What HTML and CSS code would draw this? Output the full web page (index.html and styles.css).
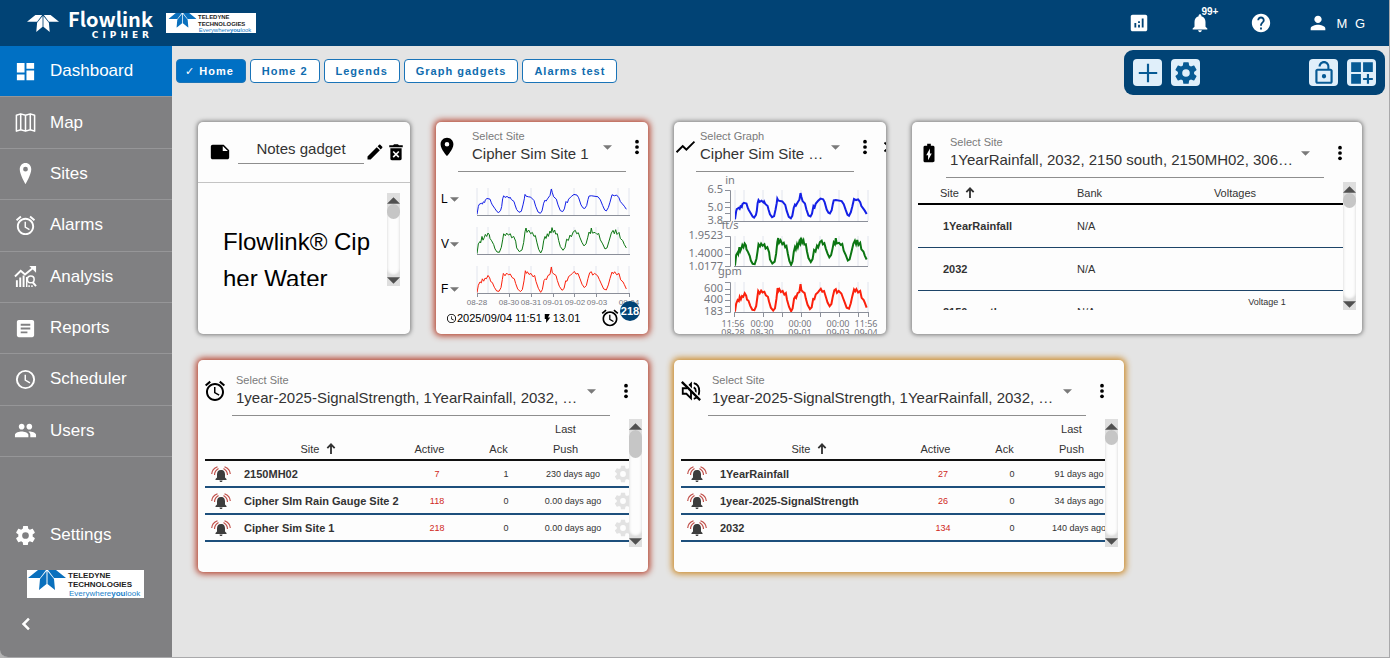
FILE: index.html
```html
<!DOCTYPE html>
<html lang="en">
<head>
	<meta charset="UTF-8">
	<meta name="viewport" content="width=device-width, initial-scale=1">
	<title>Flowlink Cipher</title>
	<link rel="stylesheet" href="styles.css">
</head>
<body>
	<!-- icon sprite -->
	<svg class="sprite" aria-hidden="true">
		<symbol id="i-dashboard" viewBox="0 0 24 24"><path d="M3 13h8V3H3v10zm0 8h8v-6H3v6zm10 0h8V11h-8v10zm0-18v6h8V3h-8z"/></symbol>
		<symbol id="i-map" viewBox="0 0 24 24"><path fill="none" stroke="currentColor" stroke-width="1.6" stroke-linejoin="round" d="M2.500 4.500L7 3l5 1.500L17 3l4.500 1.500V21L17 19.500 12 21l-5-1.500L2.500 21zM7 3v16.500M12 4.500V21M17 3v16.500"/></symbol>
		<symbol id="i-pin" viewBox="0 0 24 24"><path d="M12 1C8.500 1 6 3.700 6 7.500 6 13 12 23 12 23s6-10 6-15.500C18 3.700 15.500 1 12 1zm0 9a2.500 2.500 0 1 1 0-5 2.500 2.500 0 0 1 0 5z"/></symbol>
		<symbol id="i-place" viewBox="0 0 24 24"><path d="M12 2C8.130 2 5 5.130 5 9c0 5.250 7 13 7 13s7-7.750 7-13c0-3.870-3.130-7-7-7zm0 9.500a2.500 2.500 0 1 1 0-5 2.500 2.500 0 0 1 0 5z"/></symbol>
		<symbol id="i-alarm" viewBox="0 0 24 24"><path d="M22 5.720l-4.600-3.860-1.290 1.530 4.600 3.860L22 5.720zM7.880 3.390L6.600 1.860 2 5.710l1.290 1.530 4.590-3.850zM12.500 8H11v6l4.750 2.850.75-1.230-4-2.370V8zM12 4c-4.970 0-9 4.030-9 9s4.020 9 9 9c4.970 0 9-4.030 9-9s-4.030-9-9-9zm0 16c-3.870 0-7-3.130-7-7s3.130-7 7-7 7 3.130 7 7-3.130 7-7 7z"/></symbol>
		<symbol id="i-analysis" viewBox="0 0 24 24"><path fill="none" stroke="currentColor" stroke-width="2" d="M1 12l6-6 4.500 4L21 2"/><path d="M16 1h7v7z"/><path d="M2 16h2v7H2zm3.500-3h2v10h-2zM9 11h2v12H9zm3.500 1.500h1.500V23h-1.500zM15 21h1.500v2H15zm3 0h1.500v2H18z"/><circle cx="17.500" cy="15" r="3.500" fill="none" stroke="currentColor" stroke-width="1.600"/><path stroke="currentColor" stroke-width="2" d="M19.500 18l3.500 4"/></symbol>
		<symbol id="i-article" viewBox="0 0 24 24"><path d="M19 3H5c-1.100 0-2 .9-2 2v14c0 1.100.9 2 2 2h14c1.100 0 2-.9 2-2V5c0-1.100-.9-2-2-2zm-5 14H7v-2h7v2zm3-4H7v-2h10v2zm0-4H7V7h10v2z"/></symbol>
		<symbol id="i-clock" viewBox="0 0 24 24"><path d="M12 2a10 10 0 1 0 0 20 10 10 0 0 0 0-20zm0 18a8 8 0 1 1 0-16 8 8 0 0 1 0 16zm.5-13H11v6l5.250 3.150.75-1.230-4.500-2.670z"/></symbol>
		<symbol id="i-group" viewBox="0 0 24 24"><path d="M16 11c1.660 0 2.990-1.340 2.990-3S17.660 5 16 5s-3 1.340-3 3 1.340 3 3 3zm-8 0c1.660 0 2.990-1.340 2.990-3S9.660 5 8 5 5 6.340 5 8s1.340 3 3 3zm0 2c-2.330 0-7 1.170-7 3.500V19h14v-2.500c0-2.330-4.670-3.500-7-3.500zm8 0c-.29 0-.62.02-.97.05 1.160.84 1.970 1.970 1.970 3.450V19h6v-2.500c0-2.330-4.670-3.500-7-3.500z"/></symbol>
		<symbol id="i-gear" viewBox="0 0 24 24"><path d="M19.430 12.980c.04-.32.07-.64.07-.98s-.03-.66-.07-.98l2.110-1.650c.19-.15.24-.42.12-.64l-2-3.460c-.12-.22-.39-.3-.61-.22l-2.490 1c-.52-.4-1.080-.73-1.690-.98l-.38-2.650C14.460 2.180 14.250 2 14 2h-4c-.25 0-.46.18-.49.42l-.38 2.650c-.61.25-1.170.59-1.690.98l-2.490-1c-.23-.09-.49 0-.61.22l-2 3.460c-.13.22-.07.49.12.64l2.110 1.650c-.04.32-.07.65-.07.98s.03.66.07.98l-2.110 1.650c-.19.15-.24.42-.12.64l2 3.460c.12.22.39.3.61.22l2.490-1c.52.4 1.080.73 1.690.98l.38 2.650c.03.24.24.42.49.42h4c.25 0 .46-.18.49-.42l.38-2.650c.61-.25 1.170-.59 1.690-.98l2.490 1c.23.09.49 0 .61-.22l2-3.460c.12-.22.07-.49-.12-.64l-2.110-1.650zM12 15.500a3.500 3.500 0 1 1 0-7 3.500 3.500 0 0 1 0 7z"/></symbol>
		<symbol id="i-left" viewBox="0 0 24 24"><path fill="none" stroke="currentColor" stroke-width="3" d="M15.500 5.500L9 12l6.500 6.500"/></symbol>
		<symbol id="i-stats" viewBox="0 0 24 24"><path d="M19 3H5c-1.100 0-2 .9-2 2v14c0 1.100.9 2 2 2h14c1.100 0 2-.9 2-2V5c0-1.100-.9-2-2-2zM9 17H7v-5h2v5zm4 0h-2v-3h2v3zm0-5h-2v-2h2v2zm4 5h-2V7h2v10z"/></symbol>
		<symbol id="i-bell" viewBox="0 0 24 24"><path d="M12 22c1.100 0 2-.9 2-2h-4c0 1.100.89 2 2 2zm6-6v-5c0-3.070-1.640-5.640-4.500-6.320V4c0-.83-.67-1.500-1.500-1.500s-1.500.67-1.500 1.500v.68C7.630 5.360 6 7.920 6 11v5l-2 2v1h16v-1l-2-2z"/></symbol>
		<symbol id="i-help" viewBox="0 0 24 24"><path d="M12 2C6.480 2 2 6.480 2 12s4.480 10 10 10 10-4.480 10-10S17.520 2 12 2zm1 17h-2v-2h2v2zm2.070-7.750l-.9.92C13.450 12.900 13 13.500 13 15h-2v-.5c0-1.100.45-2.100 1.170-2.830l1.240-1.260c.37-.36.59-.86.59-1.410 0-1.100-.9-2-2-2s-2 .9-2 2H8c0-2.210 1.790-4 4-4s4 1.790 4 4c0 .88-.36 1.680-.93 2.250z"/></symbol>
		<symbol id="i-person" viewBox="0 0 24 24"><path d="M12 12c2.210 0 4-1.790 4-4s-1.790-4-4-4-4 1.790-4 4 1.790 4 4 4zm0 2c-2.670 0-8 1.340-8 4v2h16v-2c0-2.660-5.330-4-8-4z"/></symbol>
		<symbol id="i-add" viewBox="0 0 24 24"><path d="M20.500 13H13v7.500h-2V13H3.500v-2H11V3.500h2V11h7.500z"/></symbol>
		<symbol id="i-unlock" viewBox="0 0 24 24"><path d="M12 17a2 2 0 1 0 0-4 2 2 0 0 0 0 4zm6-9h-1V6c0-2.760-2.240-5-5-5S7 3.240 7 6h1.900c0-1.710 1.390-3.100 3.100-3.100s3.100 1.390 3.100 3.100v2H6c-1.100 0-2 .9-2 2v10c0 1.100.9 2 2 2h12c1.100 0 2-.9 2-2V10c0-1.100-.9-2-2-2zm0 12H6V10h12v10z"/></symbol>
		<symbol id="i-tiles" viewBox="0 0 24 24"><path d="M2 2h9v9H2zm11 0h9v9h-9zM2 13h9v9H2zm16.500 0h-2v3.500H13v2h3.500V22h2v-3.500H22v-2h-3.500z"/></symbol>
		<symbol id="i-note" viewBox="0 0 24 24"><path d="M22 10l-6-6H4c-1.100 0-2 .9-2 2v12c0 1.100.9 2 2 2h16c1.100 0 2-.9 2-2v-8zm-7-4.500l5.500 5.500H15V5.500z"/></symbol>
		<symbol id="i-edit" viewBox="0 0 24 24"><path d="M3 17.250V21h3.750L17.810 9.940l-3.750-3.750L3 17.250zM20.710 7.040c.39-.39.39-1.020 0-1.410l-2.340-2.340c-.39-.39-1.020-.39-1.410 0l-1.830 1.830 3.750 3.750 1.830-1.830z"/></symbol>
		<symbol id="i-trash" viewBox="0 0 24 24"><path d="M3 3h5l1.500-1.500h5L16 3h5v2.500H3z"/><path fill-rule="evenodd" d="M4.500 7h15v14c0 1-.8 2-2 2h-11c-1.200 0-2-1-2-2zm4.500 3.500L7.500 12l3 3-3 3L9 19.500l3-3 3 3 1.500-1.500-3-3 3-3-1.500-1.500-3 3z"/></symbol>
		<symbol id="i-trend" viewBox="0 0 24 24"><path d="M3.500 18.490l6-6.010 4 4L23 6.920l-1.410-1.410-8.090 7.970-4-4L2 16.990z"/></symbol>
		<symbol id="i-battery" viewBox="0 0 24 24"><path d="M15.670 4H14V2h-4v2H8.330C7.100 4 6 4.600 6 5.330v15.330C6 21.400 6.800 22 7.800 22h8.400c1 0 1.800-.6 1.800-1.330V5.330C18 4.600 16.900 4 15.670 4zM11 20v-5.500H9L13 7v5.500h2L11 20z"/></symbol>
		<symbol id="i-mute" viewBox="0 0 24 24"><path fill="none" stroke="currentColor" stroke-width="2" d="M3 9h4l5-5v16l-5-5H3zM15 8c3 1.500 3 6.500 0 8M15 3.500c8 2 8 15 0 17"/><path stroke="#fdfdfd" stroke-width="2" d="M4 1.500L23 20.500"/><path stroke="currentColor" stroke-width="2.500" d="M2 2l20 20"/></symbol>
		<symbol id="i-more" viewBox="0 0 24 24"><circle cx="12" cy="4" r="2.800"/><circle cx="12" cy="12" r="2.800"/><circle cx="12" cy="20" r="2.800"/></symbol>
		<symbol id="i-close" viewBox="0 0 24 24"><path stroke="currentColor" stroke-width="2.500" d="M6 6l12 12M18 6L6 18"/></symbol>
		<symbol id="i-bolt" viewBox="0 0 24 24"><path d="M6 2v11h3v9l9-12h-5l4-8z"/></symbol>
		<symbol id="i-down" viewBox="0 0 10 5"><path d="M0 0h10L5 5z"/></symbol>
		<symbol id="i-sort" viewBox="0 0 10 12"><path fill="none" stroke="currentColor" stroke-width="2" d="M5 12V2M1 5.500l4-4 4 4"/></symbol>
		<symbol id="i-ringing" viewBox="0 0 20 16"><path fill="#3d3d3d" d="M10 4c-3 0-4 2-4 4.500v3L4.500 13v1h11v-1L14 11.500v-3C14 6 13 4 10 4zM8.500 14.500h3c0 2-3 2-3 0z"/><path fill="none" stroke="#c0504a" stroke-width="1.200" d="M3.500 9c0-3 1.500-5 4-6.500M.7 8C.9 4.500 3 2 6.500.7M16.500 9c0-3-1.500-5-4-6.500M19.300 8C19.100 4.500 17 2 13.500.7"/></symbol>
		<symbol id="star" viewBox="0 0 38 20"><path d="M0 8L10 0h8l-6 8zM38 8L28 0h-8l6 8zM18.500 1v13L11 20l1-11zM19.500 1v13L27 20 26 9z"/></symbol>
		<!-- one week of daily cycles, level / velocity / flow -->
		<symbol id="week-level" viewBox="0 0 456 80" preserveAspectRatio="none"><path d="M0 78L4 55 6 49 13 45 16 48 19 41 23 43 25 35 30 31 39 33 43 44 46 50 53 60 60 70 65 73 71 66 74 55 77 32 80 23 84 28 90 25 97 30 99 27 103 34 111 40 114 50 119 64 126 72 133 69 138 50 142 32 144 19 147 24 154 26 161 27 171 37 176 54 183 71 190 75 195 68 200 45 204 36 207 39 213 30 219 22 223 3 226 14 230 26 238 33 243 50 250 67 257 70 262 62 267 40 271 44 275 33 283 25 291 19 300 21 305 29 312 50 318 59 323 61 329 52 333 34 336 24 343 23 363 26 370 35 377 52 383 65 388 68 394 58 399 42 405 20 412 23 419 21 426 29 430 40 436 47 442 54 448 63"/></symbol>
		<symbol id="week-velocity" viewBox="0 0 456 80" preserveAspectRatio="none"><path d="M0 79L4 50 9 43 11 47 15 28 18 39 22 31 25 22 29 28 33 18 37 23 39 34 44 41 50 52 54 65 60 74 67 75 73 60 77 38 80 20 85 26 89 18 94 24 100 20 104 32 110 28 116 42 119 62 127 73 135 68 140 46 144 14 147 3 150 16 155 9 161 20 166 16 171 28 175 25 180 47 185 66 191 77 196 67 200 41 204 28 207 34 211 20 214 28 219 12 222 18 225 2 229 16 233 9 236 21 241 20 245 40 250 58 258 69 264 61 269 36 274 40 279 24 283 29 289 14 295 10 299 20 304 17 309 32 315 46 321 56 327 50 332 32 336 15 340 20 343 3 346 18 354 16 360 22 365 19 370 38 377 50 384 65 390 62 396 42 403 18 408 10 412 20 416 8 420 22 426 16 430 34 437 40 442 52 448 62"/></symbol>
		<symbol id="week-flow" viewBox="0 0 456 80" preserveAspectRatio="none"><path d="M0 79L4 57 9 47 13 50 16 38 20 45 24 36 28 38 33 28 38 35 41 46 46 49 52 63 59 74 66 75 72 64 76 40 79 22 84 29 89 21 94 26 100 24 105 34 112 38 116 52 122 68 130 76 136 70 141 44 145 14 148 22 151 17 156 25 162 22 168 32 173 28 177 46 184 66 191 78 196 70 201 43 205 38 208 41 213 28 219 25 223 3 226 20 231 24 237 28 241 43 247 60 255 72 261 67 266 44 270 45 275 31 281 27 286 22 292 16 297 24 303 22 309 38 315 54 322 64 328 58 333 37 338 20 343 17 347 27 353 22 362 29 367 40 373 53 380 68 388 71 394 56 399 37 405 18 409 23 413 17 419 26 426 22 431 41 438 47 442 55 448 68"/></symbol>
	</svg>

	<div class="app">
		<header class="topbar">
			<svg class="topbar-star" aria-hidden="true"><use href="#star"/></svg>
			<div class="product"><span class="product-name">Flowlink</span><span class="product-sub">CIPHER</span></div>
			<svg class="topbar-brand" viewBox="0 0 117 27" role="img" aria-label="Teledyne Technologies">
				<use href="#star" x="1" y="0" width="38" height="20" fill="#0a70bd"/>
				<text x="41" y="8" class="brand-caps">TELEDYNE</text>
				<text x="41" y="17" class="brand-caps">TECHNOLOGIES</text>
				<text x="42" y="25" class="brand-tag">Everywhere<tspan font-weight="bold">you</tspan>look</text>
			</svg>
			<div class="topbar-actions">
				<button class="icon-btn" aria-label="Statistics"><svg><use href="#i-stats"/></svg></button>
				<button class="icon-btn" aria-label="Notifications"><svg><use href="#i-bell"/></svg><span class="count">99+</span></button>
				<button class="icon-btn" aria-label="Help"><svg><use href="#i-help"/></svg></button>
				<button class="icon-btn user" aria-label="Account"><svg><use href="#i-person"/></svg>M G</button>
			</div>
		</header>

		<div class="layout">
			<aside class="sidebar">
				<nav class="menu">
					<a class="active" href="#"><svg><use href="#i-dashboard"/></svg>Dashboard</a>
					<a href="#"><svg><use href="#i-map"/></svg>Map</a>
					<a href="#"><svg><use href="#i-pin"/></svg>Sites</a>
					<a href="#"><svg><use href="#i-alarm"/></svg>Alarms</a>
					<a href="#"><svg><use href="#i-analysis"/></svg>Analysis</a>
					<a href="#"><svg><use href="#i-article"/></svg>Reports</a>
					<a href="#"><svg><use href="#i-clock"/></svg>Scheduler</a>
					<a href="#"><svg><use href="#i-group"/></svg>Users</a>
				</nav>
				<div class="sidebar-foot">
					<a href="#"><svg><use href="#i-gear"/></svg>Settings</a>
					<svg class="foot-brand" viewBox="0 0 117 28" role="img" aria-label="Teledyne Technologies">
						<use href="#star" x="1" y="0" width="38" height="20" fill="#0a70bd"/>
						<text x="41" y="8" class="brand-caps">TELEDYNE</text>
						<text x="41" y="17" class="brand-caps">TECHNOLOGIES</text>
						<text x="42" y="26" class="brand-tag">Everywhere<tspan font-weight="bold">you</tspan>look</text>
					</svg>
					<button class="collapse" aria-label="Collapse menu"><svg><use href="#i-left"/></svg></button>
				</div>
			</aside>

			<main class="content">
				<div class="bar">
					<div class="tabs">
						<button class="tab on"><span class="tick">✓</span>Home</button>
						<button class="tab">Home 2</button>
						<button class="tab">Legends</button>
						<button class="tab">Graph gadgets</button>
						<button class="tab">Alarms test</button>
					</div>
					<div class="tools">
						<button aria-label="Add gadget"><svg><use href="#i-add"/></svg></button>
						<button aria-label="Dashboard settings"><svg><use href="#i-gear"/></svg></button>
						<button class="push" aria-label="Unlock"><svg><use href="#i-unlock"/></svg></button>
						<button aria-label="Edit layout"><svg><use href="#i-tiles"/></svg></button>
					</div>
				</div>

				<div class="grid">
					<!-- notes -->
					<section class="card">
						<div class="note-head">
							<svg class="note-icon"><use href="#i-note"/></svg>
							<input type="text" value="Notes gadget" aria-label="Gadget title">
							<button aria-label="Edit note"><svg><use href="#i-edit"/></svg></button>
							<button class="trash" aria-label="Delete note"><svg><use href="#i-trash"/></svg></button>
						</div>
						<div class="note-body">
							<p>Flowlink® Cipher Water</p>
							<div class="scroll"><svg class="up"><use href="#i-down"/></svg><div class="track"><i></i></div><svg><use href="#i-down"/></svg></div>
						</div>
					</section>

					<!-- site -->
					<section class="card red">
						<div class="head">
							<svg class="head-icon"><use href="#i-place"/></svg>
							<div class="field inset">
								<label for="site1">Select Site</label>
								<select id="site1"><option>Cipher Sim Site 1</option></select>
								<svg class="caret"><use href="#i-down"/></svg>
							</div>
							<button class="more" aria-label="More"><svg><use href="#i-more"/></svg></button>
						</div>
						<div class="site-body">
							<div class="params">
								<div class="param"><select aria-label="First parameter"><option>L</option></select><svg><use href="#i-down"/></svg></div>
								<div class="param"><select aria-label="Second parameter"><option>V</option></select><svg><use href="#i-down"/></svg></div>
								<div class="param"><select aria-label="Third parameter"><option>F</option></select><svg><use href="#i-down"/></svg></div>
							</div>
							<svg class="chart thin" viewBox="0 0 178 130">
								<path class="rules" d="M11 8v27M22 8v27M43 8v27M65 8v27M86 8v27M108 8v27M130 8v27M152 8v27M163 8v27M11 47v27M22 47v27M43 47v27M65 47v27M86 47v27M108 47v27M130 47v27M152 47v27M163 47v27M11 86v27M22 86v27M43 86v27M65 86v27M86 86v27M108 86v27M130 86v27M152 86v27M163 86v27"/>
								<path class="axis" d="M11 35.500h153M11 74.500h153M11 113.500h153M11.500 113v4M43.500 113v4M65.500 113v4M87.500 113v4M108.500 113v4M130.500 113v4M163.500 113v4"/>
								<use class="level" href="#week-level" x="11" y="8" width="152" height="27"/>
								<use class="velocity" href="#week-velocity" x="11" y="47" width="152" height="27"/>
								<use class="flow" href="#week-flow" x="11" y="86" width="152" height="27"/>
								<g class="dates">
									<text x="11" y="125">08-28</text><text x="43" y="125">08-30</text><text x="65" y="125">08-31</text><text x="87" y="125">09-01</text><text x="109" y="125">09-02</text><text x="131" y="125">09-03</text><text x="163" y="125">09-04</text>
								</g>
							</svg>
						</div>
						<div class="site-foot">
							<svg class="tiny"><use href="#i-clock"/></svg><span>2025/09/04 11:51</span>
							<svg class="tiny"><use href="#i-bolt"/></svg><span>13.01</span>
							<span class="alarm"><svg><use href="#i-alarm"/></svg><b>218</b></span>
						</div>
					</section>

					<!-- graph -->
					<section class="card">
						<div class="head">
							<svg class="head-icon"><use href="#i-trend"/></svg>
							<div class="field">
								<label for="graph1">Select Graph</label>
								<select id="graph1"><option>Cipher Sim Site …</option></select>
								<svg class="caret"><use href="#i-down"/></svg>
							</div>
							<button class="more" aria-label="More"><svg><use href="#i-more"/></svg></button>
							<button class="close" aria-label="Close"><svg><use href="#i-close"/></svg></button>
						</div>
						<svg class="chart thick" viewBox="0 0 212 162">
							<path class="rules" d="M61 18v31M70 18v31M89 18v31M108 18v31M127 18v31M146 18v31M165 18v31M184 18v31M194 18v31M61 64v30M70 64v30M89 64v30M108 64v30M127 64v30M146 64v30M165 64v30M184 64v30M194 64v30M61 110v30M70 110v30M89 110v30M108 110v30M127 110v30M146 110v30M165 110v30M184 110v30M194 110v30"/>
							<path class="axis" d="M60 49.500h134M60 94.500h134M60 140.500h134M51 18.500h5.500v31M51 30.500h5M51 35.500h5M51 41.500h5M51 64.500h5.500v30h-5.500M51 75.500h5M51 82.500h5M51 110.500h5.500v30h-5.500M51 117.500h5M51 122.500h5M51 128.500h5M51 134.500h5M51 49.500h5M60.500 140v5M89.500 140v5M108.500 140v5M127.500 140v5M146.500 140v5M165.500 140v5M184.500 140v5M194.500 140v5"/>
							<use class="level" href="#week-level" x="61" y="20" width="134" height="28"/>
							<use class="velocity" href="#week-velocity" x="61" y="65" width="134" height="29"/>
							<use class="flow" href="#week-flow" x="61" y="111" width="134" height="29"/>
							<g class="values">
								<text x="49" y="21">6.5</text><text x="49" y="39">5.0</text><text x="49" y="52">3.8</text>
								<text x="49" y="67">1.9523</text><text x="49" y="85">1.4000</text><text x="49" y="98">1.0177</text>
								<text x="49" y="120">600</text><text x="49" y="131">400</text><text x="49" y="143">183</text>
							</g>
							<g class="units"><text x="56" y="12">in</text><text x="56" y="57">ft/s</text><text x="56" y="103">gpm</text></g>
							<g class="times">
								<text x="59" y="155">11:56</text><text x="88" y="155">00:00</text><text x="126" y="155">00:00</text><text x="164" y="155">00:00</text><text x="192" y="155">11:56</text>
								<text x="59" y="164">08-28</text><text x="88" y="164">08-30</text><text x="126" y="164">09-01</text><text x="164" y="164">09-03</text><text x="192" y="164">09-04</text>
							</g>
						</svg>
					</section>

					<!-- battery -->
					<section class="card wide">
						<div class="head">
							<svg class="head-icon"><use href="#i-battery"/></svg>
							<div class="field">
								<label for="site2">Select Site</label>
								<select id="site2"><option>1YearRainfall, 2032, 2150 south, 2150MH02, 306…</option></select>
								<svg class="caret"><use href="#i-down"/></svg>
							</div>
							<button class="more" aria-label="More"><svg><use href="#i-more"/></svg></button>
						</div>
						<div class="pane battery">
							<div class="view">
								<table>
									<colgroup><col class="c-site"><col class="c-bank"><col></colgroup>
									<thead><tr><th>Site <svg class="sort"><use href="#i-sort"/></svg></th><th>Bank</th><th class="mid">Voltages</th></tr></thead>
									<tbody>
										<tr><td class="name">1YearRainfall</td><td>N/A</td><td></td></tr>
										<tr><td class="name">2032</td><td>N/A</td><td></td></tr>
										<tr><td class="name">2150 south</td><td>N/A</td><td class="volt">Voltage 1</td></tr>
									</tbody>
								</table>
							</div>
							<div class="scroll"><svg class="up"><use href="#i-down"/></svg><div class="track"><i></i></div><svg><use href="#i-down"/></svg></div>
						</div>
					</section>

					<!-- active alarms -->
					<section class="card wide red">
						<div class="head">
							<svg class="head-icon big"><use href="#i-alarm"/></svg>
							<div class="field">
								<label for="site3">Select Site</label>
								<select id="site3"><option>1year-2025-SignalStrength, 1YearRainfall, 2032, …</option></select>
								<svg class="caret"><use href="#i-down"/></svg>
							</div>
							<button class="more" aria-label="More"><svg><use href="#i-more"/></svg></button>
						</div>
						<div class="pane alarms">
							<div class="view">
								<table>
									<colgroup><col class="c-bell"><col><col class="c-active"><col class="c-ack"><col class="c-push"><col class="c-gear"></colgroup>
									<thead><tr><th></th><th class="first">Site <svg class="sort"><use href="#i-sort"/></svg></th><th>Active</th><th>Ack</th><th>Last<br>Push</th><th></th></tr></thead>
									<tbody>
										<tr><td><svg class="ringing"><use href="#i-ringing"/></svg></td><td class="name">2150MH02</td><td class="hot">7</td><td>1</td><td>230 days ago</td><td><svg class="gear"><use href="#i-gear"/></svg></td></tr>
										<tr><td><svg class="ringing"><use href="#i-ringing"/></svg></td><td class="name">Cipher SIm Rain Gauge Site 2</td><td class="hot">118</td><td>0</td><td>0.00 days ago</td><td><svg class="gear"><use href="#i-gear"/></svg></td></tr>
										<tr><td><svg class="ringing"><use href="#i-ringing"/></svg></td><td class="name">Cipher Sim Site 1</td><td class="hot">218</td><td>0</td><td>0.00 days ago</td><td><svg class="gear"><use href="#i-gear"/></svg></td></tr>
									</tbody>
								</table>
							</div>
							<div class="scroll long"><svg class="up"><use href="#i-down"/></svg><div class="track"><i></i></div><svg><use href="#i-down"/></svg></div>
						</div>
					</section>

					<!-- muted alarms -->
					<section class="card wide amber">
						<div class="head">
							<svg class="head-icon"><use href="#i-mute"/></svg>
							<div class="field">
								<label for="site4">Select Site</label>
								<select id="site4"><option>1year-2025-SignalStrength, 1YearRainfall, 2032, …</option></select>
								<svg class="caret"><use href="#i-down"/></svg>
							</div>
							<button class="more" aria-label="More"><svg><use href="#i-more"/></svg></button>
						</div>
						<div class="pane alarms over">
							<div class="view">
								<table>
									<colgroup><col class="c-bell"><col><col class="c-active"><col class="c-ack"><col class="c-push"></colgroup>
									<thead><tr><th></th><th class="first">Site <svg class="sort"><use href="#i-sort"/></svg></th><th>Active</th><th>Ack</th><th>Last<br>Push</th></tr></thead>
									<tbody>
										<tr><td><svg class="ringing"><use href="#i-ringing"/></svg></td><td class="name">1YearRainfall</td><td class="hot">27</td><td>0</td><td>91 days ago</td></tr>
										<tr><td><svg class="ringing"><use href="#i-ringing"/></svg></td><td class="name">1year-2025-SignalStrength</td><td class="hot">26</td><td>0</td><td>34 days ago</td></tr>
										<tr><td><svg class="ringing"><use href="#i-ringing"/></svg></td><td class="name">2032</td><td class="hot">134</td><td>0</td><td>140 days ago</td></tr>
									</tbody>
								</table>
							</div>
							<div class="scroll"><svg class="up"><use href="#i-down"/></svg><div class="track"><i></i></div><svg><use href="#i-down"/></svg></div>
						</div>
					</section>
				</div>
			</main>
		</div>
	</div>
</body>
</html>
```

FILE: styles.css
```css
*{box-sizing:border-box;}
body{margin:0;background:#b4b4b4;font-family:"Liberation Sans",Arial,sans-serif;color:#333;}
svg{display:block;fill:currentColor;flex:none;}
button,select,input{margin:0;padding:0;border:0;background:none;font-family:inherit;color:inherit;}
button{cursor:pointer;}
a{text-decoration:none;}
.sprite{position:absolute;width:0;height:0;}

.app{display:flex;flex-direction:column;min-height:100vh;border:solid #a9a9ab;border-width:0 1px 1px 0;border-radius:0 0 0 8px;overflow:hidden;background:#e4e4e4;}

/* top bar */
.topbar{display:flex;align-items:center;height:46px;padding:0 22px 0 27px;background:#014375;color:#fff;}
.topbar-star{width:32px;height:17px;margin-right:11px;}
.product{display:flex;flex-direction:column;align-items:flex-end;width:83px;}
.product-name{font-family:"Noto Sans CJK JP","Liberation Sans",sans-serif;font-size:20px;line-height:24px;font-weight:bold;}
.product-sub{font-family:"DejaVu Sans",sans-serif;font-size:9px;line-height:9px;font-weight:bold;letter-spacing:4px;}
.topbar-brand{width:90px;height:20px;margin-left:13px;background:#fff;}
.brand-caps{font-size:8px;font-weight:bold;fill:#222;}
.brand-tag{font-size:8px;fill:#1c7fc9;}
.topbar-actions{display:flex;align-items:center;gap:39px;margin-left:auto;}
.icon-btn{position:relative;display:flex;align-items:center;}
.icon-btn svg{width:22px;height:22px;}
.icon-btn .count{position:absolute;left:12px;top:-6px;font-size:10px;line-height:12px;font-weight:bold;}
.user{gap:7px;margin-left:-4px;font-size:13px;letter-spacing:2px;}

/* side menu */
.layout{display:flex;flex:1;}
.sidebar{display:flex;flex-direction:column;flex:none;width:172px;background:#808082;color:#fff;}
.menu{display:grid;grid-auto-rows:1fr;height:411px;}
.sidebar a{display:flex;align-items:center;gap:13px;padding-left:14px;font-size:17px;color:#fff;border-bottom:1px solid #969698;}
.sidebar a svg{width:23px;height:23px;}
.sidebar a.active{background:#0070c4;}
.sidebar-foot{display:flex;flex-direction:column;align-items:flex-start;margin-top:auto;}
.sidebar-foot a{height:50px;border:0;}
.foot-brand{width:117px;height:28px;margin:10px 0 0 27px;background:#fff;}
.collapse{margin:16px 0 23px 16px;}
.collapse svg{width:20px;height:20px;}

/* tabs and tools */
.content{flex:1;min-width:0;}
.bar{display:flex;justify-content:space-between;padding:4px 4px 0;}
.tabs{display:flex;gap:4px;margin-top:9px;}
.tab{height:24px;padding:0 11px;border:1px solid #1a74b8;border-radius:4px;background:#fff;color:#0f6cae;font-size:11px;font-weight:bold;letter-spacing:1px;}
.tab.on{padding:0 11px 0 8px;background:#0070c4;color:#fff;}
.tick{margin-right:4px;font-family:"DejaVu Sans",sans-serif;font-size:11px;}
.tools{display:flex;align-items:center;gap:9px;width:261px;height:45px;padding:0 9px;border-radius:9px;background:#014375;}
.tools button{display:flex;align-items:center;justify-content:center;width:29px;height:27px;border-radius:4px;background:#e0effa;color:#075a94;}
.tools svg{width:26px;height:26px;}
.tools .push{margin-left:auto;}

/* gadgets */
.grid{display:grid;grid-template-columns:repeat(5,minmax(0,1fr));grid-auto-rows:212px;gap:26px;padding:27px 27px 26px 26px;}
.card{display:flex;flex-direction:column;border-radius:5px;background:#fdfdfd;box-shadow:0 0 4px 1px #7c7c7c;overflow:hidden;}
.wide{grid-column:span 2;}
.red{box-shadow:0 0 6px 2px #b5432f;}
.amber{box-shadow:0 0 6px 2px #cc8a28;}

.head{display:flex;align-items:center;flex:none;height:50px;}
.head-icon{width:22px;height:22px;color:#000;}
.field{position:relative;display:flex;flex-direction:column;flex:1;min-width:0;height:50px;padding:7px 0 0 4px;border-bottom:1px solid #8e8e8e;}
.field.inset{padding-left:14px;}
.field label{font-size:11px;line-height:14px;color:#7a7a7a;}
.field select{appearance:none;width:100%;height:22px;font-size:15px;line-height:22px;}
.caret{position:absolute;right:14px;top:23px;width:9px;height:5px;color:#7a7a7a;pointer-events:none;}
.more{width:22px;color:#000;}
.more svg{width:16px;height:16px;margin:0 auto;}
.close{width:18px;margin-right:-8px;padding-left:4px;color:#000;}
.close svg{width:18px;height:18px;}
.wide .head{height:56px;padding:6px 6px 0 0;}
.wide .head-icon{margin:0 6px;}
.wide .head-icon.big{width:24px;height:24px;margin:0 5px;}
.wide .more{width:32px;}

/* notes */
.note-head{display:flex;align-items:center;height:61px;padding:0 4px 0 11px;border-bottom:1px solid #c4c4c4;color:#000;}
.note-icon{width:22px;height:22px;margin-right:7px;}
.note-head input{flex:1;min-width:0;height:30px;margin-bottom:6px;border-bottom:1px solid #8e8e8e;font-size:15px;text-align:center;color:#333;}
.note-head button{width:21px;}
.note-head button svg{width:20px;height:20px;margin:0 auto;}
.note-head .trash svg{width:18px;height:18px;}
.note-body{display:flex;gap:10px;height:93px;margin:10px 10px 0 25px;overflow:hidden;}
.note-body p{flex:1;min-width:0;margin:0;padding-top:30px;font-size:24px;line-height:37px;color:#000;word-break:break-all;}

/* scroll bar */
.scroll{display:flex;flex-direction:column;flex:none;width:13px;background:#dedede;color:#505050;}
.scroll > svg{width:13px;height:7px;margin:2px 0;}
.scroll .up{transform:rotate(180deg);margin:4px 0 0;}
.track{flex:1;border-radius:6px;background:#fdfdfd;box-shadow:inset 0 0 3px #ccc;}
.track i{display:block;height:15px;border-radius:7px;background:#c6c6c6;}
.long .track i{height:28px;}

/* site gadget */
.site-body{display:flex;margin-top:8px;padding:0 4px 0 5px;}
.params{display:flex;flex-direction:column;gap:29px;width:25px;padding-top:11px;}
.param{display:flex;align-items:center;color:#777;}
.param select{appearance:none;width:9px;height:16px;font-size:12px;color:#000;}
.param svg{width:9px;height:5px;}
.site-body .chart{flex:1;min-width:0;}
.site-foot{display:flex;align-items:center;height:16px;padding:0 8px 0 10px;font-size:11px;color:#000;}
.tiny{width:11px;height:11px;}
.alarm{position:relative;margin-left:auto;padding-right:20px;}
.alarm svg{width:20px;height:20px;}
.alarm b{position:absolute;right:0;top:-7px;width:20px;height:20px;border-radius:50%;background:#014375;color:#fff;font-size:11px;line-height:20px;text-align:center;}

/* charts */
.chart{display:block;width:100%;height:auto;fill:none;}
.rules{stroke:#e2e5ee;}
.axis{stroke:#8b8f99;}
.level{stroke:#1420e6;}
.velocity{stroke:#0b7512;}
.flow{stroke:#fb200c;}
#week-level path,#week-velocity path,#week-flow path{fill:none;vector-effect:non-scaling-stroke;}
.thin{stroke-width:1;}
.thick .level,.thick .velocity,.thick .flow{stroke-width:2;}
.chart text{fill:#75777d;stroke:none;}
.dates{font-size:8px;text-anchor:middle;}
.values,.units{font-family:"Noto Sans",sans-serif;font-size:11px;text-anchor:end;}
.units{text-anchor:middle;}
.times{font-family:"Noto Sans",sans-serif;font-size:9px;text-anchor:middle;}

/* tables */
.pane{display:flex;margin:4px 6px 0;height:128px;}
.view{flex:1;min-width:0;overflow:hidden;}
table{width:100%;table-layout:fixed;border-collapse:collapse;font-size:11px;}
th,td{padding:0;font-weight:normal;white-space:nowrap;}
.sort{display:inline-block;width:10px;height:11px;margin-left:3px;vertical-align:-1px;}
.name{font-weight:bold;text-align:left;}

.battery th{height:22px;border-bottom:2px solid #000;text-align:left;}
.battery td{height:43px;border-bottom:1px solid #1d4468;}
.battery .c-site{width:159px;}
.battery .c-bank{width:104px;}
.battery th:first-child{padding-left:22px;}
.battery .name{padding-left:25px;}
.battery .mid{padding-right:54px;text-align:center;}
.battery .volt{padding:6px 0 0 10px;vertical-align:top;text-align:center;font-size:9px;}

.alarms{margin:3px 6px 0 7px;}
.alarms table{text-align:center;}
.alarms th{height:40px;padding:0 15px 0 0;border-bottom:2px solid #111;line-height:20px;vertical-align:bottom;}
.alarms th.first{padding:0;}
.alarms td{height:27px;border-bottom:2px solid #1d4f7c;font-size:9px;}
.alarms .name{padding-left:6px;font-size:11px;}
.alarms .hot{color:#d0281c;}
.c-bell{width:33px;}
.c-active{width:78px;}
.c-ack{width:60px;}
.c-push{width:74px;}
.c-gear{width:19px;}
.ringing{width:20px;height:16px;margin-left:6px;}
.gear{width:20px;height:20px;margin-left:3px;color:#e2e2e2;}
.over table{width:calc(100% + 11px);}
```
